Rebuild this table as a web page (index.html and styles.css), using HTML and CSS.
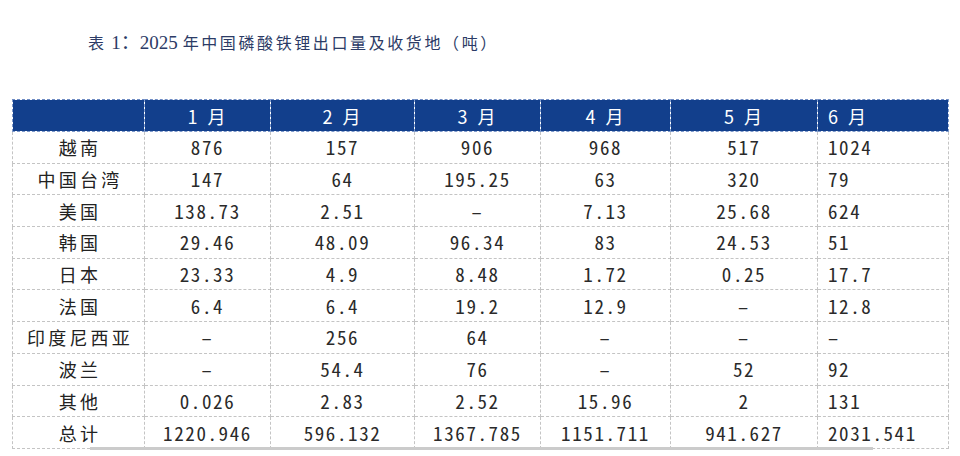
FILE: index.html
```html
<!DOCTYPE html>
<html lang="zh-CN">
<head>
<meta charset="utf-8">
<title>表 1</title>
<link rel="stylesheet" href="styles.css">
</head>
<body>
<div class="page">
  <h1 class="title"><span class="cn">表</span> 1：2025 <span class="cn">年中国磷酸铁锂出口量及收货地（吨）</span></h1>
  <div class="table-wrap">
    <table class="data">
      <colgroup>
        <col class="c0"><col class="c1"><col class="c2"><col class="c3"><col class="c4"><col class="c5"><col class="c6">
      </colgroup>
      <thead>
        <tr><th></th><th>1 月</th><th>2 月</th><th>3 月</th><th>4 月</th><th>5 月</th><th class="left">6 月</th></tr>
      </thead>
      <tbody>
        <tr><td class="lab">越南</td><td>876</td><td>157</td><td>906</td><td>968</td><td>517</td><td class="left">1024</td></tr>
        <tr><td class="lab">中国台湾</td><td>147</td><td>64</td><td>195.25</td><td>63</td><td>320</td><td class="left">79</td></tr>
        <tr><td class="lab">美国</td><td>138.73</td><td>2.51</td><td>–</td><td>7.13</td><td>25.68</td><td class="left">624</td></tr>
        <tr><td class="lab">韩国</td><td>29.46</td><td>48.09</td><td>96.34</td><td>83</td><td>24.53</td><td class="left">51</td></tr>
        <tr><td class="lab">日本</td><td>23.33</td><td>4.9</td><td>8.48</td><td>1.72</td><td>0.25</td><td class="left">17.7</td></tr>
        <tr><td class="lab">法国</td><td>6.4</td><td>6.4</td><td>19.2</td><td>12.9</td><td>–</td><td class="left">12.8</td></tr>
        <tr><td class="lab">印度尼西亚</td><td>–</td><td>256</td><td>64</td><td>–</td><td>–</td><td class="left">–</td></tr>
        <tr><td class="lab">波兰</td><td>–</td><td>54.4</td><td>76</td><td>–</td><td>52</td><td class="left">92</td></tr>
        <tr><td class="lab">其他</td><td>0.026</td><td>2.83</td><td>2.52</td><td>15.96</td><td>2</td><td class="left">131</td></tr>
        <tr><td class="lab">总计</td><td>1220.946</td><td>596.132</td><td>1367.785</td><td>1151.711</td><td>941.627</td><td class="left">2031.541</td></tr>
      </tbody>
    </table>
    <div class="scrollbar"></div>
  </div>
</div>
</body>
</html>
```
FILE: styles.css
```css
html, body {
  margin: 0;
  padding: 0;
  background: #ffffff;
}

.page {
  width: 960px;
  height: 456px;
  overflow: hidden;
  padding: 0 0 0 12px;
  box-sizing: border-box;
}

.title {
  margin: 0;
  padding: 31px 0 0 76px;
  height: 99px;
  box-sizing: border-box;
  font-family: "Liberation Serif", "Noto Sans CJK SC", serif;
  font-weight: normal;
  font-size: 19px;
  line-height: 22px;
  color: #2c3b66;
  white-space: nowrap;
}

.title .cn {
  font-family: "Noto Sans CJK SC", sans-serif;
  font-size: 16px;
  letter-spacing: 2.6px;
}

.table-wrap {
  width: 936px;
}

.data {
  border-collapse: collapse;
  table-layout: fixed;
  width: 936px;
  font-family: "Noto Sans CJK SC", sans-serif;
  color: #2a2a2a;
}

.c0 { width: 132px; }
.c1 { width: 126px; }
.c2 { width: 144px; }
.c3 { width: 126px; }
.c4 { width: 130px; }
.c5 { width: 147px; }
.c6 { width: 131px; }

.data th,
.data td {
  border: 1px dashed #c4c4c4;
  padding: 0;
  text-align: center;
  white-space: pre;
  overflow: hidden;
}

.data thead th {
  background: #123f8c;
  color: #ffffff;
  height: 31px;
  font-size: 18px;
  font-weight: normal;
  letter-spacing: 2px;
  word-spacing: 2px;
  border-color: #7f9acb;
  border-top-color: #6f8cc4;
}

.data tbody td {
  height: 30.7px;
  font-size: 19px;
  line-height: 20px;
  font-feature-settings: "hwid" 1;
  letter-spacing: 1.6px;
}

.data tbody td.lab {
  font-size: 18px;
  letter-spacing: 3.2px;
  padding-left: 3px;
  color: #222222;
}

.data .left {
  text-align: left;
  padding-left: 10px;
}

.scrollbar {
  margin: -2px 0 0 78px;
  width: 783px;
  height: 3px;
  background: #cbcbcb;
  position: relative;
}
```
